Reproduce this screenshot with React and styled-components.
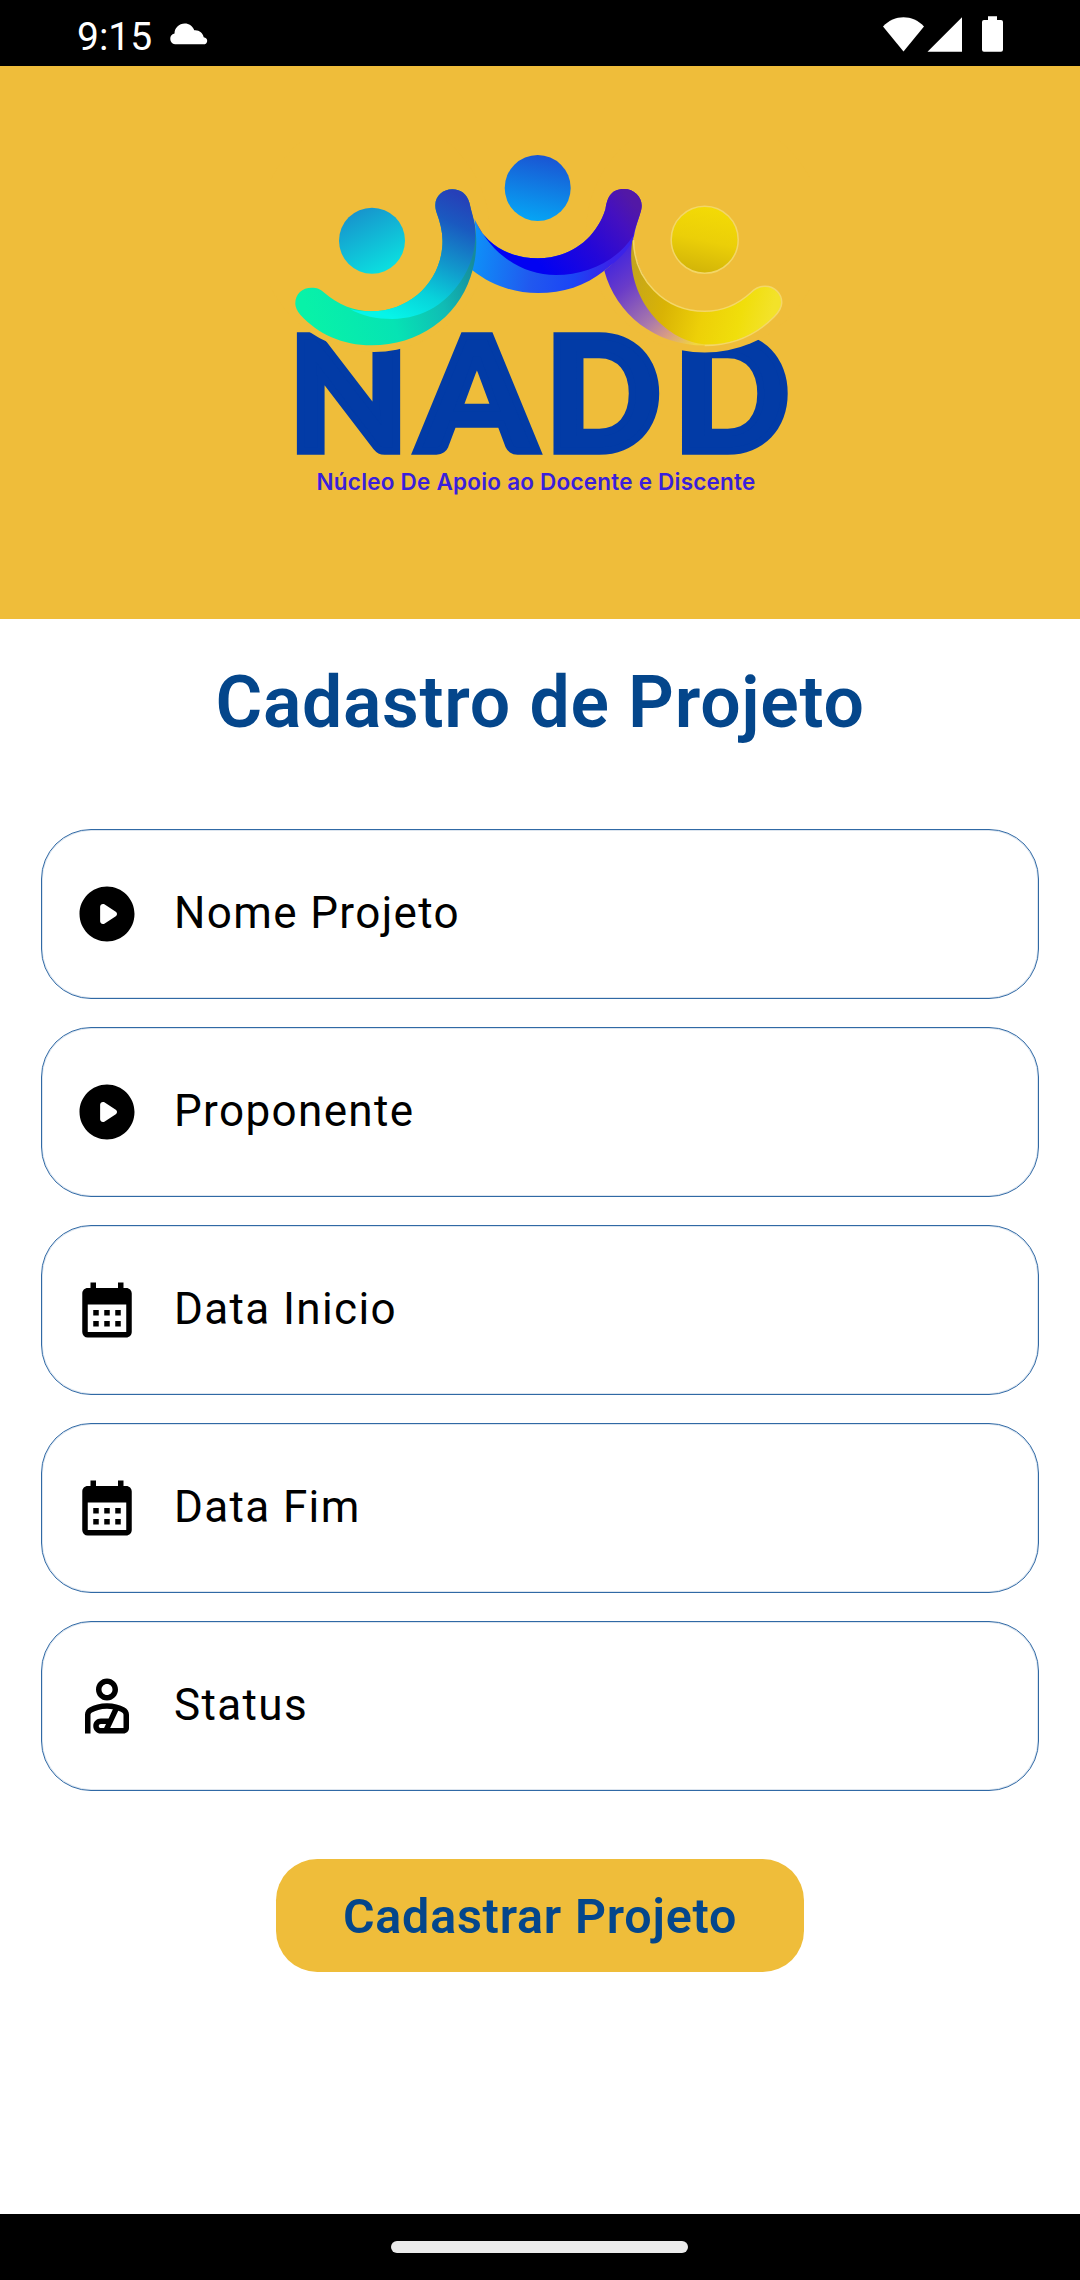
import React from 'react';
import styled, { createGlobalStyle } from 'styled-components';

const GOLD = '#efbd3a';
const NAVY = '#04468b';

const GlobalStyle = createGlobalStyle`
  * { box-sizing: border-box; }
  html, body { margin: 0; padding: 0; background: #fff; }
  body { font-family: Roboto, "Liberation Sans", sans-serif; }
`;

const Screen = styled.div`
  display: flex;
  flex-direction: column;
  width: 1080px;
  height: 2280px;
  overflow: hidden;
  background: #fff;
`;

const StatusBar = styled.header`
  display: flex;
  flex: none;
  justify-content: space-between;
  height: 66px;
  padding: 0 77px;
  background: #000;
  color: #fff;
`;

const StatusGroup = styled.div`
  display: flex;
  align-items: flex-start;
`;

const Clock = styled.span`
  width: 92px;
  padding-top: 14px;
  font-size: 39px;
  line-height: 46px;
`;

const StatusGlyph = styled.svg`
  display: block;
  width: ${(p) => p.$w}px;
  height: 66px;
  fill: #fff;
`;

const Hero = styled.section`
  display: flex;
  flex: none;
  justify-content: center;
  height: 553.4px;
  padding-top: 74px;
  background: ${GOLD};
`;

const Logo = styled.svg`
  display: block;
  width: 540px;
  height: 380px;
`;

const Letter = styled.text`
  font-family: Lato, sans-serif;
  font-weight: 900;
  font-size: 158.5px;
  fill: #023ba6;
  stroke: #023ba6;
  stroke-width: 7.4px;
`;

const Tagline = styled.text`
  font-family: Inter, sans-serif;
  font-weight: 600;
  font-size: 22.5px;
  letter-spacing: 0.22px;
  fill: #3a1fdb;
`;

const Form = styled.main`
  display: flex;
  flex: 1;
  flex-direction: column;
  align-items: center;
`;

const Title = styled.h1`
  margin: 41.6px 0 0;
  height: 84px;
  font-size: 71.5px;
  font-weight: 600;
  line-height: 84px;
  letter-spacing: 0.72px;
  color: ${NAVY};
`;

const Fields = styled.div`
  display: flex;
  flex-direction: column;
  gap: 28px;
  margin-top: 84px;
`;

const Field = styled.label`
  display: flex;
  align-items: center;
  gap: 33.6px;
  width: 998px;
  height: 170px;
  padding-left: 32.4px;
  border: 1px solid #3069a5;
  border-radius: 50px;
  box-shadow: inset 0 0 0 1px rgba(4, 70, 139, 0.14);
`;

const FieldIcon = styled.svg`
  display: block;
  width: 66px;
  height: 66px;
  fill: #000;
`;

const FieldLabel = styled.span`
  padding-bottom: 2px;
  font-size: 44px;
  line-height: 52px;
  letter-spacing: 1.375px;
  color: #000;
`;

const Submit = styled.button`
  width: 528px;
  height: 113px;
  margin: 68.5px 0 0;
  padding: 2px 0 0;
  border: 0;
  border-radius: 41.25px;
  background: ${GOLD};
  color: ${NAVY};
  font-family: Roboto, "Liberation Sans", sans-serif;
  font-size: 48.4px;
  font-weight: 600;
  letter-spacing: 0.8px;
`;

const NavBar = styled.footer`
  display: flex;
  flex: none;
  justify-content: center;
  height: 66px;
  padding: 27.2px 1px 0 0;
  background: #000;
`;

const NavPill = styled.div`
  width: 297px;
  height: 11.5px;
  border-radius: 6px;
  background: #ebebeb;
`;

const PLAY =
  'M12 2C6.48 2 2 6.48 2 12s4.48 10 10 10 10-4.48 10-10S17.52 2 12 2zM9.5 14.67V9.33c0-.79.88-1.27 1.54-.84l4.15 2.67c.61.39.61 1.29 0 1.68l-4.15 2.67c-.66.43-1.54-.05-1.54-.84z';
const CALENDAR =
  'M19 4h-1V2h-2v2H8V2H6v2H5c-1.11 0-1.99.9-1.99 2L3 20a2 2 0 0 0 2 2h14c1.1 0 2-.9 2-2V6c0-1.1-.9-2-2-2zm0 16H5V10h14v10zM9 14H7v-2h2v2zm4 0h-2v-2h2v2zm4 0h-2v-2h2v2zm-8 4H7v-2h2v2zm4 0h-2v-2h2v2zm4 0h-2v-2h2v2z';
const PERSON =
  'M12 10c2.21 0 4-1.79 4-4s-1.79-4-4-4C9.79 2 8 3.79 8 6S9.79 10 12 10zM12 4c1.1 0 2 .9 2 2s-.9 2-2 2s-2-.9-2-2S10.9 4 12 4zM18.39 12.56C16.71 11.7 14.53 11 12 11c-2.53 0-4.71.7-6.39 1.56C4.61 13.07 4 14.1 4 15.22V22h2v-6.78c0-.38.2-.72.52-.88C7.71 13.73 9.63 13 12 13c.76 0 1.47.07 2.13.2l-1.55 3.3H9.75C8.23 16.5 7 17.73 7 19.25S8.23 22 9.75 22H18c1.1 0 2-.9 2-2v-4.78C20 14.1 19.39 13.07 18.39 12.56zM10.94 20H9.75C9.34 20 9 19.66 9 19.25s.34-.75.75-.75h1.89L10.94 20zM18 20h-4.85l2.94-6.27c.54.2 1.01.41 1.4.61.31.16.51.5.51.88V20z';

const fields = [
  { label: 'Nome Projeto', icon: PLAY },
  { label: 'Proponente', icon: PLAY },
  { label: 'Data Inicio', icon: CALENDAR },
  { label: 'Data Fim', icon: CALENDAR },
  { label: 'Status', icon: PERSON },
];

const LEFT_ARM =
  'M295.3 304C295 294 302 287.7 311.7 287.7C317 287.7 320 289 324 292.5C338 304.500 354 311.3 371.7 311.3C411 311.3 442.5 280 442.5 241C442.500 231 440 222 436.700 213C435.500 209.500 435.300 207 435.300 205C435.300 196 443 189.300 452.300 189.300C461 189.300 467 194 469.500 203C471 211 473.500 219 475 226C478 246 475.500 262 470.500 277C457 318 418 345.300 371.700 345.300C342 345.300 318 334 300.500 315C297 311 295.500 307 295.300 304Z';
const LEFT_GLOW =
  'M350 309C357 311 364 311.300 371.700 311.300C411 311.300 442.500 280 442.500 241C442.500 231 440 222 436.700 213C435.500 209.500 435.300 207 435.300 205C435.300 196 443 189.300 452.300 189.300C461 189.300 467 194 469.500 203C471.500 212 474 219 475 226C476.500 243 473.500 260 464 276C448 303 424 318.500 392 319C377 319 362 316 350 309Z';
const MID_ARM =
  'M474.500 219C484 243 508 258.300 537.700 258.300C570 258.300 596 239 605.500 209C607 199 610 189 624 189C635 189 643 198 641.500 208C641 213 636 224 634 236C630 250 618 260 604.300 270.700C585 286 563 293 538 293C513 293 491 285 472 270C475 255 477 238 474.500 219Z';
const MID_DARK =
  'M475 220C484 243 508 258.300 537.700 258.300C570 258.300 596 239 605.500 209C607 199 610 189 624 189C635 189 643 198 641.500 208C641 213 636 224 633 236C616 262 586 275 556 275C522 275 492 255 475 220Z';
const RIGHT_ARM =
  'M604.300 270.700C617 261 627 248 633 236.500C634 279 664 311.300 704.700 311.300C722 311.300 738 304.500 751 292.500C755 288.500 759 286.300 765 286.300C775 286.300 782 294 781.700 303C781.500 309 778 313 774 317C755 336 732 345.500 704.700 345.500C655 345.500 616 314 604.300 270.700Z';
const RIGHT_GOLD =
  'M633 237C634 279 664 311.300 704.700 311.300C722 311.300 738 304.500 751 292.500C755 288.500 759 286.300 765 286.300C775 286.300 782 294 781.700 303C781.500 309 778 313 774 317C755 336 732 344.500 706 344.500C662 341 622 293 633 237Z';

const letters = [
  { ch: 'N', x: 288.8, s: 0.975 },
  { ch: 'A', x: 418.2, s: 1.054 },
  { ch: 'D', x: 545.6, s: 0.957 },
  { ch: 'D', x: 674.1, s: 0.957 },
];

function Gradient({ id, from, to, stops }) {
  return (
    <linearGradient id={id} gradientUnits="userSpaceOnUse" x1={from[0]} y1={from[1]} x2={to[0]} y2={to[1]}>
      {stops.map(([offset, color]) => (
        <stop key={offset} offset={offset} stopColor={color} />
      ))}
    </linearGradient>
  );
}

function NaddLogo() {
  return (
    <Logo viewBox="270 140 540 380" role="img" aria-label="NADD">
      <defs>
        <Gradient id="headL" from={[355, 212]} to={[385, 272]} stops={[[0, '#1795cd'], [1, '#0be0e0']]} />
        <Gradient id="headM" from={[545, 156]} to={[532, 220]} stops={[[0, '#1a55d3'], [1, '#06a4f4']]} />
        <Gradient id="headR" from={[712, 208]} to={[698, 273]} stops={[[0, '#f3da06'], [0.5, '#ebcf08'], [1, '#d2b408']]} />
        <Gradient id="armL" from={[310, 320]} to={[476, 265]} stops={[[0, '#08f2a8'], [0.45, '#06e3b4'], [0.75, '#10bcb5'], [1, '#168a9b']]} />
        <Gradient id="glowL" from={[453, 192]} to={[395, 319]} stops={[[0, '#2640b8'], [0.2, '#1a59c0'], [0.5, '#1199cc'], [0.75, '#08d2da'], [1, '#06f5e8']]} />
        <Gradient id="armM" from={[472, 250]} to={[610, 270]} stops={[[0, '#0d92f8'], [0.45, '#2158ef'], [0.75, '#1b45f5'], [1, '#3b22e8']]} />
        <Gradient id="darkM" from={[540, 265]} to={[628, 196]} stops={[[0, '#0202f2'], [0.45, '#2407d8'], [0.8, '#4410c0'], [1, '#5218a6']]} />
        <Gradient id="armR" from={[618, 255]} to={[695, 344]} stops={[[0, '#4527dc'], [0.25, '#6a3cc8'], [0.6, '#a777ac'], [0.78, '#d69a86'], [1, '#f1d640']]} />
        <Gradient id="goldR" from={[634, 262]} to={[775, 300]} stops={[[0, '#c4a51c'], [0.28, '#d9b305'], [0.55, '#edd008'], [0.8, '#f0de0b'], [1, '#f3e229']]} />
      </defs>

      {letters.map((l, i) => (
        <Letter key={i} transform={`translate(${l.x} 450.7) scale(${l.s} 1)`}>
          {l.ch}
        </Letter>
      ))}

      <ellipse cx="374" cy="233.500" rx="116" ry="118.500" fill={GOLD} />
      <circle cx="704.700" cy="233.500" r="119" fill={GOLD} />

      <circle cx="372" cy="240.700" r="33" fill="url(#headL)" />
      <circle cx="537.700" cy="188" r="33" fill="url(#headM)" />
      <circle cx="704.700" cy="239.700" r="33.500" fill="url(#headR)" stroke="#f3d667" strokeWidth="1.500" />

      <path d={RIGHT_ARM} fill="url(#armR)" />
      <path d={RIGHT_GOLD} fill="url(#goldR)" />
      <path
        d="M633.500 240C634 279 664 311.300 704.700 311.300C722 311.300 738 304.500 751 292.500C755 288.500 759 286.300 765 286.300C775 286.300 782 294 781.700 303C781.500 309 778 313 774 317C755 336 732 345.500 704.700 345.500"
        fill="none"
        stroke="#f4d768"
        strokeWidth="1.500"
      />
      <path d={MID_ARM} fill="url(#armM)" />
      <path d={MID_DARK} fill="url(#darkM)" />
      <path d={LEFT_ARM} fill="url(#armL)" />
      <path d={LEFT_GLOW} fill="url(#glowL)" />

      <Tagline x="316.500" y="490.300">
        Núcleo De Apoio ao Docente e Discente
      </Tagline>
    </Logo>
  );
}

export default function App() {
  return (
    <>
      <GlobalStyle />
      <Screen>
        <StatusBar>
          <StatusGroup>
            <Clock>9:15</Clock>
            <StatusGlyph $w={40} viewBox="169 0 40 66">
              <path d="M175 44.300a5.500 5.500 0 0 1-.5-10.800C174.500 28 179 23.500 184.800 23.500c4.200 0 7.900 2.600 9.500 6.800 4.600-.6 8.600 2.500 9.400 7 2.200.3 3.500 1.800 3.500 3.600 0 2-1.600 3.400-3.700 3.400z" />
            </StatusGlyph>
          </StatusGroup>
          <StatusGroup>
            <StatusGlyph $w={121} viewBox="882 0 121 66">
              <path d="M883 26.500C894.500 14.300 912.500 14.300 924 26.500L903.500 51.500z" />
              <path d="M927.500 51.700L962 17.300V51.700z" />
              <path d="M988 16.300h9v3.700h4a2 2 0 0 1 2 2V49.700a2 2 0 0 1-2 2H984a2 2 0 0 1-2-2V22a2 2 0 0 1 2-2h4z" />
            </StatusGlyph>
          </StatusGroup>
        </StatusBar>

        <Hero>
          <NaddLogo />
        </Hero>

        <Form>
          <Title>Cadastro de Projeto</Title>
          <Fields>
            {fields.map((f) => (
              <Field key={f.label}>
                <FieldIcon viewBox="0 0 24 24">
                  <path d={f.icon} />
                </FieldIcon>
                <FieldLabel>{f.label}</FieldLabel>
              </Field>
            ))}
          </Fields>
          <Submit type="button">Cadastrar Projeto</Submit>
        </Form>

        <NavBar>
          <NavPill />
        </NavBar>
      </Screen>
    </>
  );
}
